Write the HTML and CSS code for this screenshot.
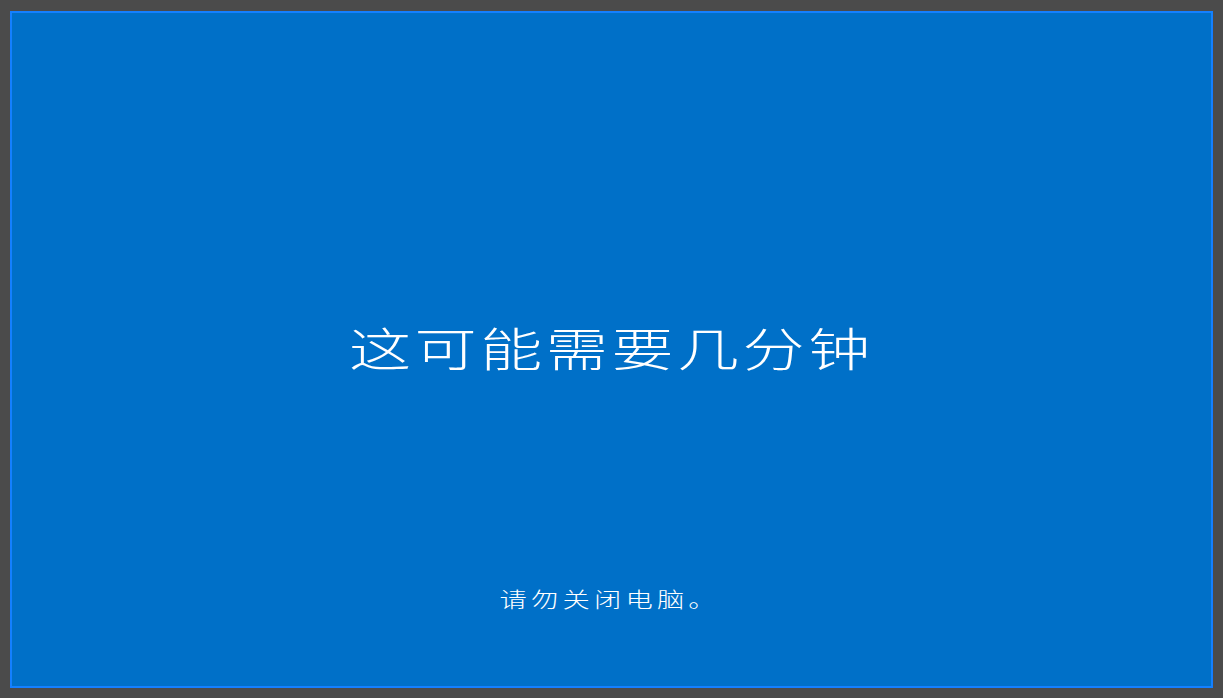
FILE: index.html
```html
<!DOCTYPE html>
<html lang="zh-CN">

<head>
    <meta charset="UTF-8">
    <meta name="viewport" content="width=device-width, initial-scale=1.0">
    <title>请勿关闭电脑</title>
    <link rel="stylesheet" href="styles.css">
</head>

<body>

    <div id="screen">
        <div class="title"><span>这可能需要几分钟</span></div>
        <div class="note"><span>请勿关闭电脑。</span></div>
    </div>

</body>

</html>
```

FILE: styles.css
```css
* {
    box-sizing: border-box;
}

html,
body {
    height: 100%;
}

body {
    margin: 0;
    padding: 11px 10px 10px 10px;
    background: #4b4b4b;
    font-family: "Noto Sans CJK SC", "Noto Sans", sans-serif;
    color: #ffffff;
}

#screen {
    height: 677px;
    border: 2px solid #1480ff;
    background: #0070c8;
    display: flex;
    flex-direction: column;
    align-items: center;
}

.title,
.note {
    font-weight: 300;
    white-space: nowrap;
}

.title span,
.note span {
    display: inline-block;
    transform-origin: center;
}

.title {
    margin-top: 305px;
    font-size: 46px;
    line-height: 56px;
}

.title span {
    letter-spacing: 2.6px;
    transform: scaleX(1.35);
}

.note {
    margin-top: 209px;
    margin-left: -4px;
    font-size: 21px;
    line-height: 30px;
}

.note span {
    letter-spacing: 3.2px;
    transform: scaleX(1.3);
}
```
